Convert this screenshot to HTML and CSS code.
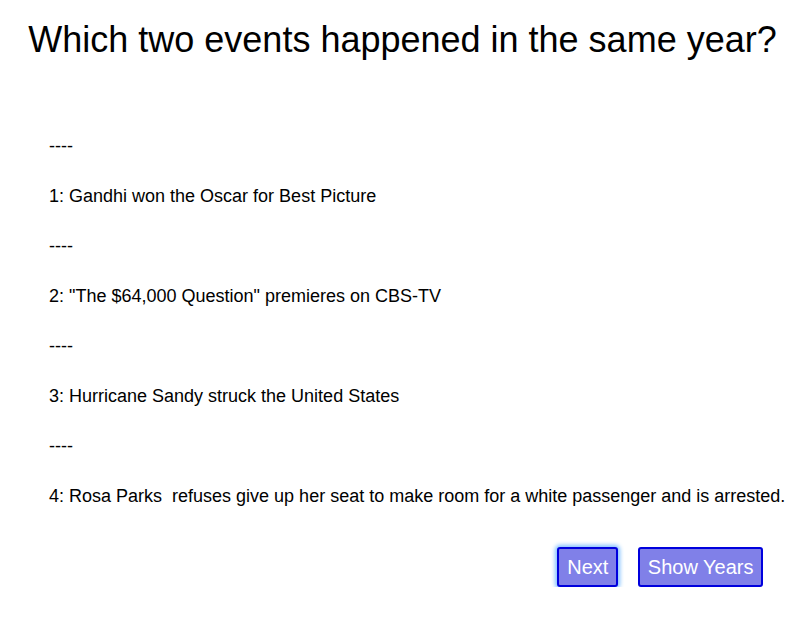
FILE: index.html
```html
<!DOCTYPE html>
<html>
<head>
<meta charset="utf-8">
<link rel="stylesheet" href="styles.css">
</head>
<body>
<h1 class="title">Which two events happened in the same year?</h1>
<div class="events">
  <div class="line">----</div>
  <div class="line">1: Gandhi won the Oscar for Best Picture</div>
  <div class="line">----</div>
  <div class="line">2: "The $64,000 Question" premieres on CBS-TV</div>
  <div class="line">----</div>
  <div class="line">3: Hurricane Sandy struck the United States</div>
  <div class="line">----</div>
  <div class="line">4: Rosa Parks  refuses give up her seat to make room for a white passenger and is arrested.</div>
</div>
<div class="actions">
  <button class="btn btn-focus">Next</button>
  <button class="btn btn-wide">Show Years</button>
</div>
</body>
</html>
```
FILE: styles.css
```css
html, body {
  margin: 0;
  padding: 0;
  background: #fff;
  font-family: "Liberation Sans", Arial, sans-serif;
  color: #000;
}
.title {
  font-size: 36px;
  font-weight: normal;
  text-align: center;
  margin: 0;
  padding: 19px 4px 0 0;
  line-height: 41px;
}
.events {
  padding: 61px 0 0 49px;
  font-size: 18px;
}
.line {
  height: 50px;
  line-height: 50px;
  white-space: pre;
}
.actions {
  display: flex;
  justify-content: flex-end;
  gap: 20px;
  padding: 26px 46px 0 0;
}
.btn {
  font-family: "Liberation Sans", Arial, sans-serif;
  font-size: 20px;
  color: #fff;
  background: #8080e8;
  border: 2px solid #0000dd;
  border-radius: 3px;
  height: 40px;
  padding: 0 8px;
}
.btn-wide {
  padding: 0 7.5px;
}
.btn-focus {
  box-shadow: 0 0 4px 2px #80c0ff;
}
```
